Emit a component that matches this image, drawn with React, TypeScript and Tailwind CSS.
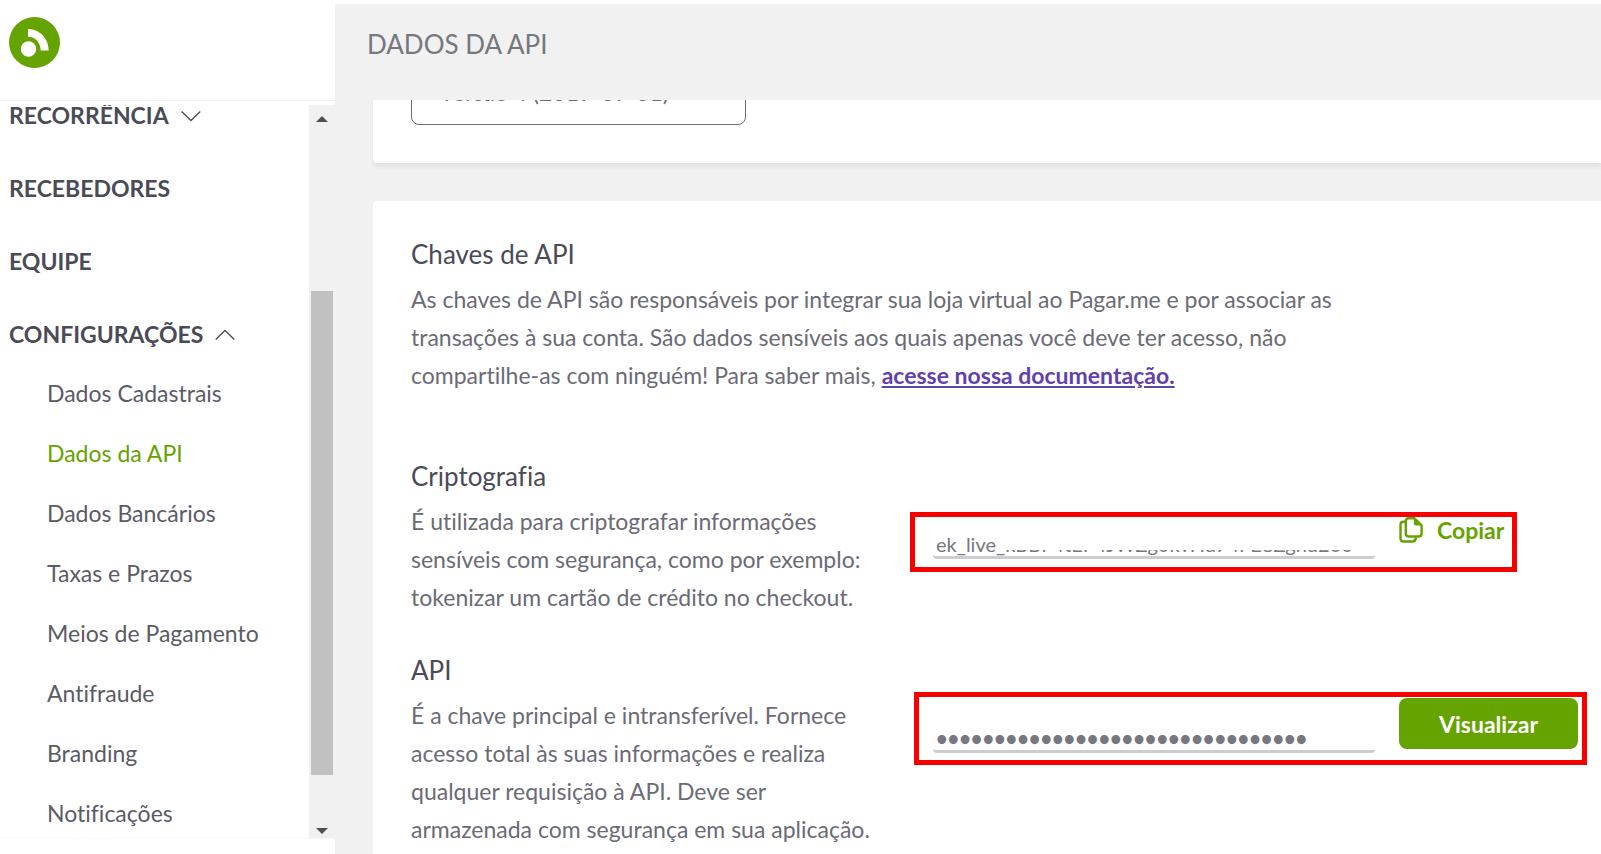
import React from 'react';

const menu = ['RECORRÊNCIA', 'RECEBEDORES', 'EQUIPE', 'CONFIGURAÇÕES'];
const submenu = [
  'Dados Cadastrais',
  'Dados da API',
  'Dados Bancários',
  'Taxas e Prazos',
  'Meios de Pagamento',
  'Antifraude',
  'Branding',
  'Notificações',
];

function Logo() {
  return (
    <svg viewBox="0 0 51 51" className="h-[51px] w-[51px]" role="img" aria-label="Pagar.me">
      <circle cx="25.5" cy="25.5" r="25.5" fill="#65a300" />
      <circle cx="19.5" cy="32" r="7.7" fill="#fff" />
      <path d="M19 12 C30.5 12 39.7 21.500 39.700 33.500 H31.700 C31.700 25.800 26.400 19.800 19 19.800 Z" fill="#fff" />
    </svg>
  );
}

function Chevron({ up = false }: { up?: boolean }) {
  return (
    <svg viewBox="0 0 20 12" className="h-3 w-5" fill="none" stroke="#4b4b57" strokeWidth="1.3" aria-hidden="true">
      <path d={up ? 'M0.700 10.500 L10 1.500 L19.300 10.500' : 'M0.700 1.500 L10 10.500 L19.300 1.500'} />
    </svg>
  );
}

function CopyIcon() {
  return (
    <svg viewBox="0 0 24 26" className="h-[26px] w-6 shrink-0" fill="none" stroke="#65a300" strokeWidth="2.4" strokeLinejoin="round" aria-hidden="true">
      <path d="M6.800 4.800 H4.500 Q1.500 4.800 1.500 7.800 V21.500 Q1.500 24.500 4.500 24.500 H13.500 Q16.500 24.500 17 20.500" />
      <path d="M9.800 1.300 H15.500 L22.600 8.300 V16.500 Q22.600 19.500 19.600 19.500 H9.800 Q6.800 19.500 6.800 16.500 V4.300 Q6.800 1.300 9.800 1.300 Z" />
      <path d="M14.800 1.500 V6.500 Q14.800 8.500 16.800 8.500 H22.300 Z" fill="#65a300" stroke="none" />
    </svg>
  );
}

function Scrollbar() {
  return (
    <div className="flex w-[26px] shrink-0 flex-col items-center bg-[#f1f1f1]" aria-hidden="true">
      <svg viewBox="0 0 12 6" className="mt-[11px] h-1.5 w-3"><path d="M0 6 L6 0 L12 6 Z" fill="#505050" /></svg>
      <div className="mt-[169px] w-[22px] grow bg-[#c1c1c1]" />
      <svg viewBox="0 0 12 6" className="mt-[53px] mb-1 h-1.5 w-3"><path d="M0 0 L12 0 L6 6 Z" fill="#505050" /></svg>
    </div>
  );
}

function Sidebar() {
  return (
    <aside className="flex w-[335px] shrink-0 flex-col bg-white">
      <div className="flex h-[97px] shrink-0 items-start border-b border-[#f1f1f1] px-[9px] pt-[13px]">
        <Logo />
      </div>
      <div className="mt-1 flex min-h-0 grow border-b border-[#f7f7f7]">
        <nav className="grow overflow-hidden">
          <ul className="-mt-[11px] flex flex-col gap-[30px] pl-[9px]">
            {menu.map((item) => (
              <li key={item}>
                <button type="button" className="flex h-[43px] items-center gap-3 text-[23px] font-bold text-[#4b4b57]">
                  {item}
                  {item === 'RECORRÊNCIA' && <Chevron />}
                  {item === 'CONFIGURAÇÕES' && <Chevron up />}
                </button>
                {item === 'CONFIGURAÇÕES' && (
                  <ul className="mt-[7px] pl-[38px]">
                    {submenu.map((sub) => (
                      <li key={sub} className="h-[60px] leading-[60px]">
                        <a
                          href="#"
                          className={sub === 'Dados da API' ? 'text-[23px] text-[#65a300]' : 'text-[23px] text-[#5b5b66]'}
                        >
                          {sub}
                        </a>
                      </li>
                    ))}
                  </ul>
                )}
              </li>
            ))}
          </ul>
        </nav>
        <Scrollbar />
      </div>
      <div className="h-[15px] shrink-0" />
    </aside>
  );
}

export default function App() {
  return (
    <div className="flex h-screen overflow-hidden bg-white pt-1 font-['Lato',sans-serif] [font-variant-ligatures:none]">
      <Sidebar />
      <div className="flex min-w-0 grow flex-col bg-[#f1f1f1]">
        <header className="flex h-24 shrink-0 items-start px-8 pt-6">
          <h1 className="text-[26px] leading-8 text-[#777780]">DADOS DA API</h1>
        </header>
        <main className="flex min-h-0 grow flex-col gap-[38px] overflow-hidden pl-[38px]">
          <section className="-mt-[50px] shrink-0 rounded-l bg-white px-[38px] pt-[18px] pb-[38px] shadow-[0_4px_4px_rgba(0,0,0,0.06)]">
            <select
              aria-label="Versão da API"
              className="block h-[57px] w-[335px] appearance-none rounded-lg border border-[#6b6b76] bg-white pb-2 pl-[27px] text-[23px] text-[#6b6b76]"
            >
              <option>Versão 4 (2019-09-01)</option>
            </select>
          </section>

          <section className="shrink-0 rounded-l bg-white px-[38px] pt-[38px] pb-10 text-[23px] leading-[38px] text-[#6b6b76]">
            <h2 className="text-[26px] leading-[30px] text-[#4b4b57]">Chaves de API</h2>
            <p className="mt-[11px] max-w-[940px]">
              As chaves de API são responsáveis por integrar sua loja virtual ao Pagar.me e por associar as transações à
              sua conta. São dados sensíveis aos quais apenas você deve ter acesso, não compartilhe-as com ninguém! Para
              saber mais,{' '}
              <a href="#" className="font-bold text-[#6141ac] underline">
                acesse nossa documentação.
              </a>
            </p>

            <div className="mt-[67px] flex items-start">
              <div className="w-[499px] shrink-0 pr-6">
                <h2 className="text-[26px] leading-[30px] text-[#4b4b57]">Criptografia</h2>
                <p className="mt-[11px]">
                  É utilizada para criptografar informações sensíveis com segurança, como por exemplo: tokenizar um
                  cartão de crédito no checkout.
                </p>
              </div>
              <div className="mt-[51px] flex h-[60px] w-[607px] shrink-0 items-start gap-6 border-5 border-[#f70000] pl-[18px]">
                <div className="relative w-[442px]">
                  <input
                    aria-label="Chave de criptografia"
                    readOnly
                    value="ek_live_kBBF4tEP4JWZg0kvHd74FE8Zgnd200"
                    className="h-[42px] w-full rounded border-b-3 border-[#cdcdd0] bg-white px-[3px] pt-[14px] text-[20px] leading-6 text-[#777780]"
                  />
                  <div className="absolute top-3.5 right-0 left-[70px] h-[19px] bg-white" />
                </div>
                <button type="button" className="flex h-[26px] items-center gap-3.5 font-bold text-[#65a300]">
                  <CopyIcon />
                  Copiar
                </button>
              </div>
            </div>

            <div className="mt-[39px] flex items-start">
              <div className="w-[503px] shrink-0 pr-6">
                <h2 className="text-[26px] leading-[30px] text-[#4b4b57]">API</h2>
                <p className="mt-[11px]">
                  É a chave principal e intransferível. Fornece acesso total às suas informações e realiza qualquer
                  requisição à API. Deve ser armazenada com segurança em sua aplicação.
                </p>
              </div>
              <div className="mt-[37px] flex h-[73px] w-[673px] shrink-0 items-start gap-6 border-5 border-[#f70000] pl-[14px]">
                <input
                  type="password"
                  aria-label="Chave de API"
                  readOnly
                  value="00000000000000000000000000000000"
                  className="h-14 w-[442px] rounded border-b-3 border-[#cdcdd0] bg-white px-[3px] pt-[28px] text-[20px] leading-6 font-bold text-[#777780]"
                />
                <button type="button" className="mt-px h-[51px] w-[179px] rounded-lg bg-[#65a300] font-bold text-white">
                  Visualizar
                </button>
              </div>
            </div>
          </section>
        </main>
      </div>
    </div>
  );
}
